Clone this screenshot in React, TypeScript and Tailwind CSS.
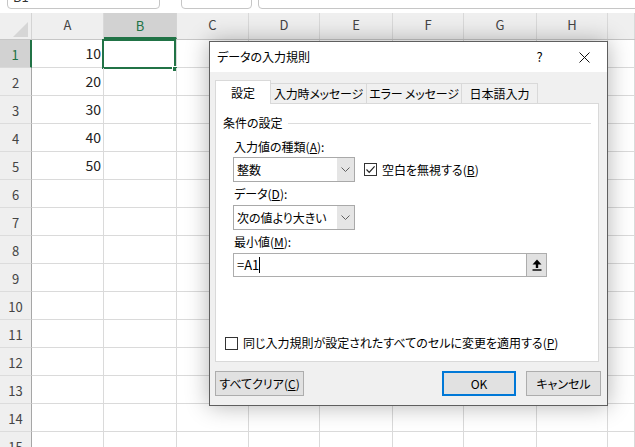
import React from "react";

const gridCols = "grid grid-cols-[32px_72px_73px_72px_71px_73px_71px_73px_71px_1fr]";
const colLabels = ["A", "B", "C", "D", "E", "F", "G", "H", ""];
const values: Record<number, string> = { 1: "10", 2: "20", 3: "30", 4: "40", 5: "50" };
const rows = Array.from({ length: 15 }, (_, i) => i + 1);

function Check({ checked }: { checked?: boolean }) {
  return (
    <span className="w-[13px] h-[13px] border border-[#333333] bg-white flex items-center justify-center shrink-0">
      {checked && (
        <svg width="11" height="11" viewBox="0 0 11 11">
          <path d="M1.5 5.5 L4.2 8.3 L9.6 2.4" fill="none" stroke="#222222" strokeWidth="1.2" />
        </svg>
      )}
    </span>
  );
}

function Combo({ value }: { value: string }) {
  return (
    <div className="w-[122px] h-[25px] border border-[#a9a9a9] bg-white flex shrink-0">
      <div className="flex-1 flex items-center pl-[3px] text-[12px]">{value}</div>
      <div className="w-[17px] bg-[#e5e5e5] flex items-center justify-center">
        <svg width="9" height="5" viewBox="0 0 9 5">
          <path d="M0.5 0.5 L4.5 4.5 L8.5 0.5" fill="none" stroke="#606060" />
        </svg>
      </div>
    </div>
  );
}

function Sheet() {
  return (
    <div className="flex flex-col font-['Noto_Sans_CJK_JP',sans-serif]">
      {/* formula bar, mostly scrolled off */}
      <div className="h-[13px] bg-white overflow-hidden flex items-start">
        <div className="ml-[7px] w-[153px] h-[24px] -mt-[15px] border border-[#c6c6c6] rounded-[4px] pl-[5px] pt-[1px] text-[13px] text-[#333]">
          B1
        </div>
        <div className="ml-[21px] w-[71px] h-[24px] -mt-[15px] border border-[#c6c6c6] rounded-[4px]" />
        <div className="ml-[6px] flex-1 h-[24px] -mt-[15px] border border-[#c6c6c6] rounded-[4px] -mr-[10px]" />
      </div>

      {/* column header */}
      <div className={`${gridCols} h-[27px] bg-[#efefef] border-b border-[#c6c6c6]`}>
        <div className="border-r border-[#d4d4d4] flex items-start pl-[13px] pt-[9px]">
          <svg width="16" height="16" viewBox="0 0 16 16">
            <polygon points="15,0 15,15 0,15" fill="#d6d6d6" />
          </svg>
        </div>
        {colLabels.map((c, i) => (
          <div
            key={i}
            className={
              c === "B"
                ? "bg-[#d2d2d2] border-r border-[#d4d4d4] border-b-2 border-b-[#217346] flex items-center justify-center pt-[1px] text-[13px] text-[#217346]"
                : "border-r border-[#d9d9d9] flex items-center justify-center pb-[2px] text-[13px] text-[#444444]"
            }
          >
            {c}
          </div>
        ))}
      </div>

      {rows.map((r) => (
        <div key={r} className={`${gridCols} h-[28px]`}>
          <div
            className={
              r === 1
                ? "bg-[#d2d2d2] border-b border-[#d9d9d9] border-r-2 border-r-[#217346] flex items-center justify-center pt-[3px] text-[13px] text-[#217346]"
                : "bg-[#efefef] border-b border-[#dcdcdc] border-r border-r-[#a6a6a6] flex items-center justify-center pt-[3px] text-[13px] text-[#444444]"
            }
          >
            {r}
          </div>
          {colLabels.map((c, i) => (
            <div key={i} className="relative border-r border-b border-[#dadada] flex items-center justify-end pr-[2px] pb-[1px] text-[14px] text-[#222]">
              {c === "A" ? values[r] : null}
              {c === "B" && r === 1 && (
                <div className="absolute -left-[2px] -top-px right-0 -bottom-[2px] border-2 border-[#217346]">
                  <div className="absolute -right-[4px] -bottom-[5px] w-[6px] h-[6px] bg-[#217346] border border-white" />
                </div>
              )}
            </div>
          ))}
        </div>
      ))}
    </div>
  );
}

function Dialog() {
  return (
    <div className="absolute left-[209px] top-[41px] w-[399px] h-[365px] border border-[#5f5f5f] bg-[#f0f0f0] shadow-[0_0_22px_rgba(0,0,0,0.3)] flex flex-col text-black text-[12px] font-['Noto_Sans_CJK_JP',sans-serif] [font-feature-settings:'palt']">
      <div className="h-[30px] bg-white flex items-center shrink-0">
        <div className="flex-1 pl-[7px]">データの入力規則</div>
        <div className="w-[45px] h-full flex items-center justify-center text-[13px]">?</div>
        <div className="w-[45px] h-full flex items-center justify-center">
          <svg width="11" height="11" viewBox="0 0 11 11">
            <path d="M0.5 0.5 L10.5 10.5 M10.5 0.5 L0.5 10.5" stroke="#111111" strokeWidth="1" />
          </svg>
        </div>
      </div>

      <div className="pl-[5px] pt-[8px]">
        <div className="relative z-10 flex items-end h-[24px]">
          <div className="w-[56px] h-[24px] bg-white border border-b-0 border-[#d9d9d9] flex items-center justify-center">設定</div>
          <div className="w-[96px] h-[21px] border border-l-0 border-[#d9d9d9] flex items-center justify-center tracking-[-0.2px]">入力時メッセージ</div>
          <div className="w-[95px] h-[21px] border border-l-0 border-[#d9d9d9] flex items-center justify-center tracking-[-0.2px]">エラー メッセージ</div>
          <div className="w-[76px] h-[21px] border border-l-0 border-[#d9d9d9] flex items-center justify-center">日本語入力</div>
        </div>

        <div className="-mt-px w-[384px] h-[259px] bg-white border border-[#d9d9d9] flex flex-col">
          <div className="mt-[11px] h-[16px] flex items-center pl-[7px]">
            <span>条件の設定</span>
            <span className="flex-1 h-px bg-[#dcdcdc] ml-[5px] mr-[7px]" />
          </div>

          <div className="pl-[17px] flex flex-col">
            <div className="mt-[8px] h-[16px] flex items-center pl-px">
              入力値の種類(<span className="underline">A</span>):
            </div>
            <div className="mt-[2px] flex items-center">
              <Combo value="整数" />
              <div className="ml-[9px] flex items-center gap-[5px]">
                <Check checked />
                <span>
                  空白を無視する(<span className="underline">B</span>)
                </span>
              </div>
            </div>
            <div className="mt-[4px] h-[16px] flex items-center pl-px">
              データ(<span className="underline">D</span>):
            </div>
            <div className="mt-[3px]">
              <Combo value="次の値より大きい" />
            </div>
            <div className="mt-[4px] h-[16px] flex items-center pl-px">
              最小値(<span className="underline">M</span>):
            </div>
            <div className="mt-[3px] flex h-[24px]">
              <div className="w-[294px] border border-[#adadad] bg-white flex items-center pl-[3px] text-[13px]">
                <span>=A1</span>
                <span className="w-px h-[16px] bg-black" />
              </div>
              <div className="w-[21px] -ml-px border border-[#adadad] bg-[#e1e1e1] flex items-center justify-center">
                <svg width="10" height="12" viewBox="0 0 10 12">
                  <polygon points="5,0.5 9.5,5.5 0.5,5.5" fill="#000000" />
                  <rect x="3.8" y="5" width="2.4" height="4" fill="#000000" />
                  <rect x="0.5" y="10.3" width="9" height="1.4" fill="#000000" />
                </svg>
              </div>
            </div>
          </div>

          <div className="mt-[58px] pl-[9px] flex items-center gap-[5px] h-[16px]">
            <Check />
            <span>
              同じ入力規則が設定されたすべてのセルに変更を適用する(<span className="underline">P</span>)
            </span>
          </div>
        </div>
      </div>

      <div className="mt-[9px] pl-[5px] pr-[6px] flex items-center">
        <div className="w-[89px] h-[25px] border border-[#adadad] bg-[#e1e1e1] flex items-center justify-center">
          すべてクリア(<span className="underline">C</span>)
        </div>
        <div className="flex-1" />
        <div className="w-[74px] h-[25px] border-2 border-[#0078d7] bg-[#e1e1e1] flex items-center justify-center">OK</div>
        <div className="ml-[10px] w-[75px] h-[25px] border border-[#adadad] bg-[#e1e1e1] flex items-center justify-center">キャンセル</div>
      </div>
    </div>
  );
}

export default function App() {
  return (
    <div className="relative w-[635px] h-[447px] overflow-hidden bg-white">
      <Sheet />
      <Dialog />
    </div>
  );
}
